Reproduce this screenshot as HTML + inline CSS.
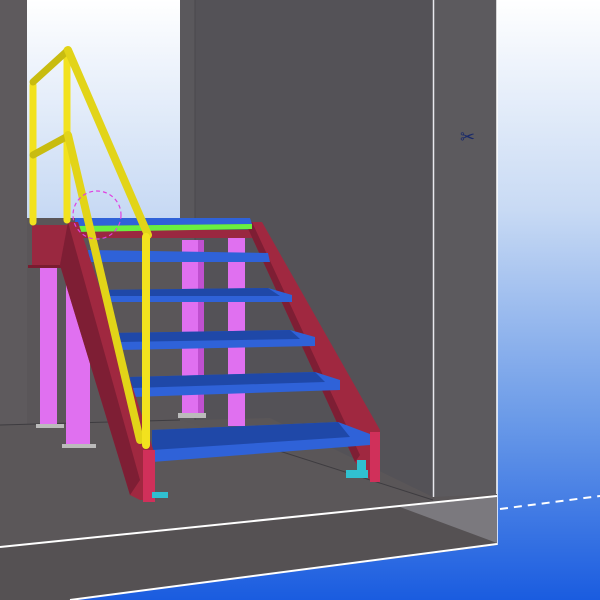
<!DOCTYPE html>
<html><head><style>
html,body{margin:0;padding:0;width:600px;height:600px;overflow:hidden}
svg{display:block}
</style></head><body>
<svg width="600" height="600" viewBox="0 0 600 600" xmlns="http://www.w3.org/2000/svg">
<defs>
<linearGradient id="bg" x1="0" y1="0" x2="0" y2="1">
<stop offset="0" stop-color="#ffffff"/>
<stop offset="0.35" stop-color="#c8daf4"/>
<stop offset="0.7" stop-color="#6a9ae8"/>
<stop offset="1" stop-color="#1a5ce0"/>
</linearGradient>
</defs>
<rect width="600" height="600" fill="url(#bg)"/>
<!-- left wall -->
<rect x="0" y="0" width="27" height="430" fill="#5e5a5d"/>
<rect x="27" y="218" width="155" height="212" fill="#5a5659"/>
<!-- middle wall -->
<rect x="180" y="0" width="253" height="500" fill="#545257"/>
<rect x="180" y="0" width="15" height="430" fill="#5a585c"/>
<line x1="195" y1="0" x2="195" y2="420" stroke="#4a484c" stroke-width="1"/>
<!-- right wall -->
<rect x="433" y="0" width="64" height="500" fill="#5c5a5e"/>
<line x1="433.5" y1="0" x2="433.5" y2="500" stroke="#e8e8ee" stroke-width="1.5"/>
<line x1="497" y1="0" x2="497" y2="545" stroke="#ffffff" stroke-width="1.5"/>
<text x="460" y="143" font-size="18" fill="#1a2a6a" font-family="DejaVu Sans, sans-serif">✂</text>
<!-- floor -->
<polygon points="0,425 270,418 433,497 497,494 497,545 75,600 0,600" fill="#5a5658"/>
<polygon points="0,425 180,420 300,455 433,500 0,548" fill="#5b5759"/>
<line x1="0" y1="425" x2="180" y2="420" stroke="#3e3c40"/>
<line x1="270" y1="448" x2="433" y2="500" stroke="#3e3c40"/>
<polygon points="0,548 497,495 497,545 75,600 0,600" fill="#555153"/>
<polygon points="400,507 497,497 497,543" fill="#7b797e"/>
<line x1="0" y1="547" x2="497" y2="496" stroke="#fff" stroke-width="2"/>
<line x1="70" y1="600" x2="497" y2="544" stroke="#fff" stroke-width="2"/>
<line x1="500" y1="509" x2="600" y2="496" stroke="#fff" stroke-width="2" stroke-dasharray="8,6"/>
<!-- back pink columns -->
<rect x="182" y="240" width="22" height="178" fill="#e070f0"/>
<rect x="198" y="240" width="6" height="178" fill="#c050d0"/>
<rect x="228" y="236" width="17" height="190" fill="#e070f0"/>
<rect x="178" y="413" width="28" height="5" fill="#bbbbbb"/>
<!-- front pink columns -->
<rect x="40" y="265" width="17" height="160" fill="#e070f0"/>
<rect x="66" y="265" width="24" height="182" fill="#e070f0"/>
<rect x="36" y="424" width="28" height="4" fill="#bbbbbb"/>
<rect x="62" y="444" width="34" height="4" fill="#bbbbbb"/>
<!-- top platform -->
<rect x="32" y="225" width="42" height="42" fill="#9a2840"/>
<rect x="28" y="265" width="36" height="3" fill="#7a1c30"/>
<rect x="74" y="230" width="180" height="8" fill="#9a2840"/>
<!-- right stringer -->
<polygon points="245,222 262,222 380,430 380,480 370,480 355,462" fill="#a02840"/>
<polygon points="245,222 252,222 360,455 355,462" fill="#7e1e34"/>
<rect x="370" y="432" width="10" height="50" fill="#d0305a"/>
<rect x="346" y="470" width="22" height="8" fill="#30c0d0"/>
<rect x="357" y="460" width="9" height="18" fill="#30c0d0"/>
<!-- treads -->
<g>
<polygon points="75,218 250,218 252,224 75,226" fill="#2f62d8"/>
<polygon points="75,226 252,224 252,229 75,232" fill="#69f040"/>
<polygon points="88,250 268,253 270,262 90,262" fill="#2f62d8"/>
<polygon points="100,290 268,288 292,295 292,302 103,302" fill="#2f62d8"/>
<polygon points="100,290 268,288 280,296 103,296" fill="#1f48a8"/>
<polygon points="115,333 290,330 315,337 315,346 118,350" fill="#2f62d8"/>
<polygon points="115,333 290,330 300,339 118,342" fill="#1f48a8"/>
<polygon points="130,377 315,372 340,380 340,390 132,397" fill="#2f62d8"/>
<polygon points="130,377 315,372 325,382 132,388" fill="#1f48a8"/>
<polygon points="152,430 338,422 370,434 370,445 152,462" fill="#2f62d8"/>
<polygon points="152,430 338,422 350,437 152,450" fill="#1f48a8"/>
</g>
<!-- left stringer -->
<polygon points="68,222 78,222 155,455 155,500 140,500 130,495 60,265" fill="#a02840"/>
<polygon points="60,265 68,222 140,480 130,495" fill="#7e1e34"/>
<rect x="143" y="450" width="12" height="52" fill="#d0305a"/>
<rect x="152" y="492" width="16" height="6" fill="#30c0d0"/>
<!-- railing -->
<g stroke="#f2e21e" stroke-linecap="round" fill="none">
<line x1="33" y1="85" x2="33" y2="222" stroke-width="7"/>
<line x1="67" y1="50" x2="67" y2="220" stroke-width="7"/>
<line x1="33" y1="82" x2="66" y2="52" stroke-width="7" stroke="#c8bc10"/>
<line x1="33" y1="155" x2="66" y2="137" stroke-width="7" stroke="#c8bc10"/>
<line x1="68" y1="50" x2="148" y2="235" stroke-width="8" stroke="#e2d418"/>
<line x1="68" y1="135" x2="140" y2="440" stroke-width="8" stroke="#e2d418"/>
<line x1="146" y1="237" x2="146" y2="445" stroke-width="8"/>
</g>
<circle cx="97" cy="215" r="24" fill="none" stroke="#e040e0" stroke-dasharray="4,3" stroke-width="1.2"/>
</svg>
</body></html>
